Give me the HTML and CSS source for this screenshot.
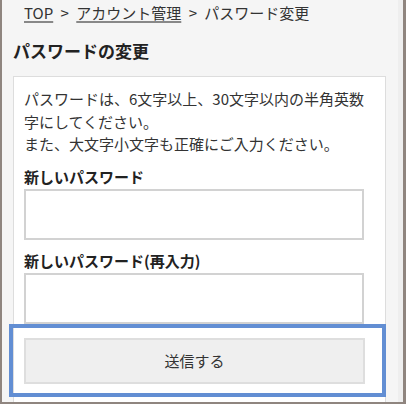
FILE: index.html
```html
<!DOCTYPE html>
<html lang="ja">
<head>
<meta charset="utf-8">
<title>パスワードの変更</title>
<link rel="stylesheet" href="styles.css">
</head>
<body>
<div class="frame">
  <div class="content">
    <nav class="crumbs"><a href="#">TOP</a> &gt; <a href="#">アカウント管理</a> &gt; パスワード変更</nav>
    <h1 class="title">パスワードの変更</h1>
    <div class="card">
      <p class="note">パスワードは、6文字以上、30文字以内の半角英数字にしてください。<br>また、大文字小文字も正確にご入力ください。</p>
      <label class="label first">新しいパスワード</label>
      <input class="field" type="password">
      <label class="label">新しいパスワード(再入力)</label>
      <input class="field" type="password">
      <div class="btn-wrap">
        <button class="btn" type="button">送信する</button>
        <span class="highlight"></span>
      </div>
    </div>
  </div>
  <div class="scroll"></div>
</div>
</body>
</html>
```
FILE: styles.css
```css
html, body {
  margin: 0;
  padding: 0;
}
body {
  font-family: "Noto Sans CJK JP", "Noto Sans", sans-serif;
  color: #333;
  background: #f4f4f4;
}
.frame {
  box-sizing: border-box;
  width: 406px;
  height: 404px;
  border-left: 2px solid #8f857f;
  border-right: 3px solid #8f857f;
  border-bottom: 2px solid #8f857f;
  background: #f5f5f5;
  display: flex;
  overflow: hidden;
}
.content {
  flex: 1;
  padding: 0 12px 0 11px;
}
.scroll {
  width: 5px;
  background: #eeeeee;
}
.crumbs {
  padding: 1px 0 0 11px;
  font-size: 15px;
  line-height: 24px;
  color: #333;
  white-space: nowrap;
  word-spacing: 4px;
}
.crumbs a {
  color: #333;
  text-decoration: underline;
  text-decoration-color: #888;
  text-decoration-thickness: 2px;
  text-underline-offset: 2px;
  word-spacing: 0;
}
.title {
  margin: 14px 0 13px;
  font-size: 17px;
  line-height: 24px;
  font-weight: bold;
  color: #222;
}
.card {
  background: #fff;
  border: 1px solid #dddddd;
  padding: 11px 10px 40px;
  min-height: 340px;
}
.note {
  margin: 0;
  font-size: 15px;
  line-height: 22.5px;
  color: #333;
}
.label {
  display: block;
  margin-top: 10px;
  padding-bottom: 2px;
  font-size: 15px;
  line-height: 21px;
  font-weight: bold;
  color: #222;
}
.label.first {
  margin-top: 10px;
}
.field {
  display: block;
  box-sizing: border-box;
  width: 340px;
  height: 51px;
  margin: 0;
  border: 2px solid #d2d2d2;
  background: #fff;
  border-radius: 0;
  outline: none;
}
.btn-wrap {
  position: relative;
  margin-top: 14px;
  width: 341px;
}
.btn {
  display: block;
  box-sizing: border-box;
  width: 341px;
  height: 46px;
  border: 2px solid #dedede;
  background: #efefef;
  font-family: "Noto Sans CJK JP", "Noto Sans", sans-serif;
  font-size: 15px;
  color: #333;
  border-radius: 0;
  padding: 0;
}
.highlight {
  position: absolute;
  left: -15px;
  top: -14px;
  right: -21px;
  bottom: -13px;
  border: 4px solid #628ed3;
  pointer-events: none;
}
```
